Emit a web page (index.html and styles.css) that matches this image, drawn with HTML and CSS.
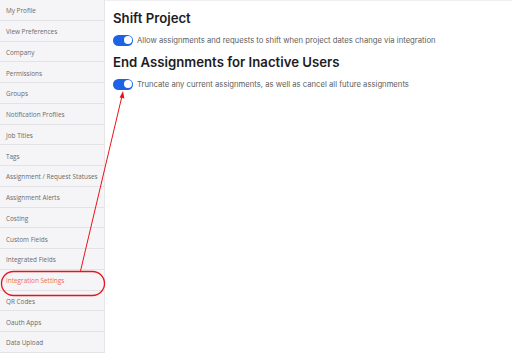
FILE: index.html
```html
<!DOCTYPE html>
<html>
<head>
<meta charset="utf-8">
<link rel="stylesheet" href="styles.css">
</head>
<body>
<div class="app">
  <nav class="sidebar">
    <div class="item">My Profile</div>
    <div class="item">View Preferences</div>
    <div class="item">Company</div>
    <div class="item">Permissions</div>
    <div class="item">Groups</div>
    <div class="item">Notification Profiles</div>
    <div class="item">Job Titles</div>
    <div class="item">Tags</div>
    <div class="item">Assignment / Request Statuses</div>
    <div class="item">Assignment Alerts</div>
    <div class="item">Costing</div>
    <div class="item">Custom Fields</div>
    <div class="item">Integrated Fields</div>
    <div class="item active">Integration Settings</div>
    <div class="item">QR Codes</div>
    <div class="item">Oauth Apps</div>
    <div class="item">Data Upload</div>
  </nav>
  <main class="content">
    <h2 class="heading">Shift Project</h2>
    <div class="setting">
      <span class="toggle"><span class="knob"></span></span>
      <span class="label">Allow assignments and requests to shift when project dates change via integration</span>
    </div>
    <h2 class="heading">End Assignments for Inactive Users</h2>
    <div class="setting">
      <span class="toggle"><span class="knob"></span></span>
      <span class="label">Truncate any current assignments, as well as cancel all future assignments</span>
    </div>
  </main>
  <svg class="annotation" width="512" height="353" viewBox="0 0 512 353">
    <rect x="1.5" y="271.5" width="103" height="24" rx="12" ry="12" fill="none" stroke="#e8141c" stroke-width="1.3"/>
    <line x1="80.5" y1="271" x2="122" y2="96" stroke="#e8141c" stroke-width="1"/>
    <polygon points="123,91 119.6,97.5 124.4,98.6" fill="#e8141c"/>
  </svg>
</div>
</body>
</html>
```
FILE: styles.css
```css
* { box-sizing: border-box; }
html, body { margin: 0; padding: 0; }
body {
  width: 512px;
  height: 353px;
  overflow: hidden;
  background: #fff;
  font-family: "Open Sans", sans-serif;
}
.app {
  position: relative;
  display: flex;
  width: 512px;
  height: 353px;
}
.sidebar {
  width: 105px;
  flex: none;
  background: #f5f5f7;
  border-right: 1px solid #e6e6e8;
  display: flex;
  flex-direction: column;
}
.item {
  height: 20.75px;
  flex: none;
  display: flex;
  align-items: center;
  padding: 2px 0 0 6px;
  font-size: 6.4px;
  color: #6a6a6a;
  border-bottom: 1px solid #e3e3e5;
  white-space: nowrap;
}
.item.active { color: #f2694d; }
.content {
  flex: 1;
  border-top: 1px solid #efeff1;
  padding: 8px 0 0 8px;
  font-family: "Inter", sans-serif;
}
.heading {
  margin: 0;
  font-size: 13.2px;
  font-weight: 600;
  color: #1d1d1f;
  line-height: 18px;
}
.setting {
  display: flex;
  align-items: center;
  gap: 4px;
  height: 12px;
  margin: 7px 0 7px;
}
.toggle {
  width: 20px;
  height: 11px;
  border-radius: 6px;
  background: #1c63e8;
  position: relative;
  flex: none;
}
.knob {
  position: absolute;
  right: 1.5px;
  top: 1.5px;
  width: 8px;
  height: 8px;
  border-radius: 50%;
  background: #fff;
}
.label {
  font-size: 7.7px;
  color: #606060;
  white-space: nowrap;
}
.annotation {
  position: absolute;
  left: 0;
  top: 0;
  pointer-events: none;
}
```
